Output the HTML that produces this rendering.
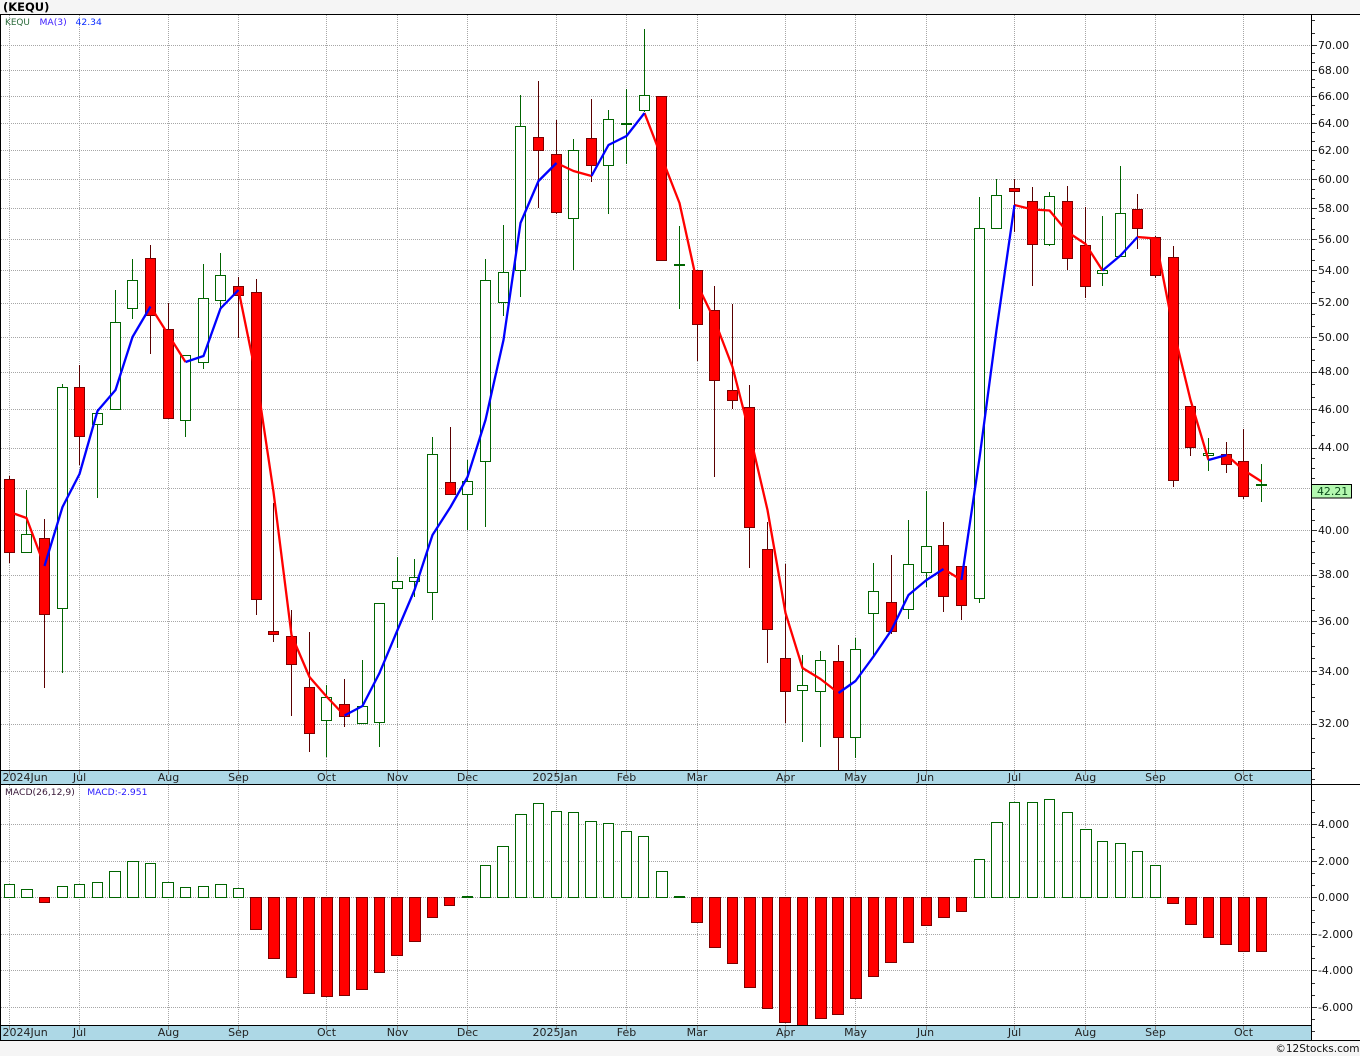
<!DOCTYPE html>
<html><head><meta charset="utf-8"><title>KEQU</title>
<style>html,body{margin:0;padding:0;background:#f5f5f5;width:1360px;height:1056px;overflow:hidden}svg{display:block}text{font-family:"DejaVu Sans","Liberation Sans",sans-serif}.a{font-size:10.9px;fill:#111}.s{font-size:11px;fill:#222}.m{font-size:11px;fill:#222;text-anchor:middle}</style></head>
<body>
<svg xmlns="http://www.w3.org/2000/svg" width="1360" height="1056" viewBox="0 0 1360 1056">
<rect width="1360" height="1056" fill="#f5f5f5"/>
<rect x="0" y="14" width="1360" height="1027" fill="#fff"/>
<text x="3" y="11" style="font-size:11.5px;font-weight:bold;fill:#000">(KEQU)</text>
<g shape-rendering="crispEdges" fill="none">
<path stroke="#a6a6a6" stroke-dasharray="1 1" d="M1 45.5H1311M1 70.5H1311M1 96.5H1311M1 123.5H1311M1 150.5H1311M1 179.5H1311M1 208.5H1311M1 239.5H1311M1 270.5H1311M1 303.5H1311M1 337.5H1311M1 372.5H1311M1 409.5H1311M1 448.5H1311M1 488.5H1311M1 530.5H1311M1 575.5H1311M1 621.5H1311M1 671.5H1311M1 724.5H1311M1 824.5H1311M1 861.5H1311M1 897.5H1311M1 934.5H1311M1 970.5H1311M1 1007.5H1311"/>
<path stroke="#a6a6a6" stroke-dasharray="1 1" d="M9.5 15V770M79.5 15V770M168.5 15V770M238.5 15V770M326.5 15V770M397.5 15V770M467.5 15V770M556.5 15V770M626.5 15V770M697.5 15V770M785.5 15V770M855.5 15V770M926.5 15V770M1014.5 15V770M1085.5 15V770M1155.5 15V770M1243.5 15V770M9.5 785V1025M79.5 785V1025M168.5 785V1025M238.5 785V1025M326.5 785V1025M397.5 785V1025M467.5 785V1025M556.5 785V1025M626.5 785V1025M697.5 785V1025M785.5 785V1025M855.5 785V1025M926.5 785V1025M1014.5 785V1025M1085.5 785V1025M1155.5 785V1025M1243.5 785V1025"/>
<path stroke="#006400" d="M26.5 490V552M62.5 384V673M97.5 409V498M115.5 290V409M132.5 259V319M185.5 355V437M203.5 264V369M220.5 253V309M326.5 685V757M362.5 660V723M379.5 603V747M397.5 557V648M414.5 559V597M432.5 437V620M467.5 460V530M485.5 259V527M503.5 225V316M520.5 95V297M573.5 139V270M608.5 110V214M626.5 89V164M644.5 29V112M679.5 226V309M802.5 655V742M820.5 651V747M855.5 638V758M873.5 563V657M908.5 520V619M926.5 491V587M979.5 197V603M996.5 179V228M1049.5 192V246M1102.5 216V286M1120.5 166V256M1208.5 438V471M1261.5 464V502"/>
<path stroke="#5a0000" d="M9.5 476V563M44.5 519V688M79.5 365V465M150.5 245V354M168.5 303V418M238.5 277V338M256.5 279V615M273.5 503V642M291.5 610V716M309.5 632V752M344.5 679V727M450.5 427V494M538.5 81V208M556.5 120V214M591.5 99V182M697.5 270V361M714.5 286V477M732.5 304V409M749.5 385V568M767.5 522V663M785.5 564V723M838.5 645V770M891.5 555V634M943.5 522V612M961.5 566V620M1014.5 179V232M1032.5 187V286M1067.5 186V270M1085.5 207V298M1137.5 194V249M1155.5 236V278M1173.5 246V487M1190.5 406V456M1226.5 442V473M1243.5 429V499"/>
<path fill="#fff" stroke="#006400" d="M21.5 534.5h10V552.5h-10zM57.5 387.5h10V608.5h-10zM92.5 413.5h10V424.5h-10zM110.5 322.5h10V409.5h-10zM127.5 280.5h10V308.5h-10zM180.5 355.5h10V420.5h-10zM198.5 298.5h10V362.5h-10zM215.5 275.5h10V300.5h-10zM321.5 697.5h10V720.5h-10zM357.5 706.5h10V723.5h-10zM374.5 603.5h10V722.5h-10zM392.5 581.5h10V588.5h-10zM409.5 577.5h10V581.5h-10zM427.5 454.5h10V592.5h-10zM462.5 481.5h10V494.5h-10zM480.5 280.5h10V461.5h-10zM498.5 272.5h10V302.5h-10zM515.5 126.5h10V270.5h-10zM568.5 150.5h10V218.5h-10zM603.5 119.5h10V165.5h-10zM639.5 95.5h10V110.5h-10zM797.5 685.5h10V690.5h-10zM815.5 660.5h10V691.5h-10zM850.5 649.5h10V737.5h-10zM868.5 591.5h10V613.5h-10zM903.5 564.5h10V609.5h-10zM921.5 546.5h10V572.5h-10zM974.5 228.5h10V598.5h-10zM991.5 195.5h10V228.5h-10zM1044.5 196.5h10V244.5h-10zM1097.5 270.5h10V273.5h-10zM1115.5 213.5h10V256.5h-10zM1203.5 453.5h10V455.5h-10z"/>
<path fill="#006400" d="M621 123h11v2h-11zM674 264h11v2h-11zM1256 484h11v2h-11z"/>
<path fill="#f00" stroke="#7b0000" d="M4.5 479.5h10V552.5h-10zM39.5 538.5h10V614.5h-10zM74.5 387.5h10V436.5h-10zM145.5 258.5h10V315.5h-10zM163.5 329.5h10V418.5h-10zM233.5 286.5h10V295.5h-10zM251.5 292.5h10V599.5h-10zM268.5 631.5h10V634.5h-10zM286.5 636.5h10V664.5h-10zM304.5 687.5h10V733.5h-10zM339.5 704.5h10V716.5h-10zM445.5 482.5h10V494.5h-10zM533.5 137.5h10V150.5h-10zM551.5 154.5h10V212.5h-10zM586.5 138.5h10V165.5h-10zM656.5 96.5h10V260.5h-10zM692.5 270.5h10V324.5h-10zM709.5 310.5h10V380.5h-10zM727.5 390.5h10V400.5h-10zM744.5 407.5h10V527.5h-10zM762.5 549.5h10V629.5h-10zM780.5 658.5h10V691.5h-10zM833.5 661.5h10V737.5h-10zM886.5 602.5h10V631.5h-10zM938.5 545.5h10V596.5h-10zM956.5 566.5h10V605.5h-10zM1009.5 188.5h10V191.5h-10zM1027.5 201.5h10V244.5h-10zM1062.5 201.5h10V258.5h-10zM1080.5 245.5h10V286.5h-10zM1132.5 209.5h10V228.5h-10zM1150.5 237.5h10V275.5h-10zM1168.5 257.5h10V480.5h-10zM1185.5 406.5h10V447.5h-10zM1221.5 454.5h10V464.5h-10zM1238.5 461.5h10V496.5h-10z"/>
<path fill="#fff" stroke="#006400" d="M4.5 884.5h10V897.5h-10zM21.5 889.5h11V897.5h-11zM57.5 886.5h10V897.5h-10zM74.5 884.5h10V897.5h-10zM92.5 882.5h10V897.5h-10zM109.5 871.5h11V897.5h-11zM127.5 861.5h11V897.5h-11zM145.5 863.5h10V897.5h-10zM162.5 882.5h11V897.5h-11zM180.5 887.5h10V897.5h-10zM198.5 886.5h10V897.5h-10zM215.5 884.5h11V897.5h-11zM233.5 888.5h10V897.5h-10zM480.5 865.5h10V897.5h-10zM497.5 846.5h11V897.5h-11zM515.5 814.5h11V897.5h-11zM533.5 803.5h10V897.5h-10zM551.5 811.5h10V897.5h-10zM568.5 812.5h10V897.5h-10zM585.5 821.5h11V897.5h-11zM603.5 823.5h10V897.5h-10zM621.5 831.5h10V897.5h-10zM638.5 836.5h10V897.5h-10zM656.5 871.5h11V897.5h-11zM974.5 859.5h10V897.5h-10zM991.5 822.5h11V897.5h-11zM1009.5 802.5h10V897.5h-10zM1027.5 802.5h10V897.5h-10zM1044.5 799.5h10V897.5h-10zM1062.5 812.5h10V897.5h-10zM1080.5 829.5h11V897.5h-11zM1097.5 841.5h10V897.5h-10zM1115.5 843.5h10V897.5h-10zM1132.5 851.5h10V897.5h-10zM1150.5 865.5h10V897.5h-10z"/>
<path fill="#006400" d="M462 896h11v2h-11zM674 896h11v2h-11z"/>
<path fill="#f00" stroke="#7b0000" d="M39.5 897.5h10V902.5h-10zM250.5 897.5h11V929.5h-11zM268.5 897.5h11V958.5h-11zM286.5 897.5h10V977.5h-10zM303.5 897.5h11V993.5h-11zM321.5 897.5h11V996.5h-11zM339.5 897.5h10V995.5h-10zM356.5 897.5h11V989.5h-11zM374.5 897.5h10V972.5h-10zM391.5 897.5h11V955.5h-11zM409.5 897.5h11V941.5h-11zM427.5 897.5h10V917.5h-10zM444.5 897.5h10V905.5h-10zM691.5 897.5h11V922.5h-11zM709.5 897.5h11V947.5h-11zM727.5 897.5h10V963.5h-10zM744.5 897.5h11V987.5h-11zM762.5 897.5h10V1008.5h-10zM779.5 897.5h11V1022.5h-11zM797.5 897.5h10V1030h-10zM815.5 897.5h11V1018.5h-11zM832.5 897.5h11V1014.5h-11zM850.5 897.5h11V998.5h-11zM868.5 897.5h10V976.5h-10zM885.5 897.5h11V962.5h-11zM903.5 897.5h10V942.5h-10zM921.5 897.5h10V925.5h-10zM938.5 897.5h11V917.5h-11zM956.5 897.5h10V911.5h-10zM1167.5 897.5h11V903.5h-11zM1185.5 897.5h11V924.5h-11zM1203.5 897.5h10V937.5h-10zM1220.5 897.5h11V944.5h-11zM1238.5 897.5h11V951.5h-11zM1256.5 897.5h10V951.5h-10z"/>
</g>
<g fill="none" stroke-width="2.3" stroke-linejoin="round">
<path stroke="#f00" d="M9.5 512L26.5 518L44.5 566M150.5 306.5L168.5 335L185.5 362M238.5 290L256.5 378L273.5 492L291.5 635L309.5 677L326.5 696.5L344.5 715.5M556.5 163L573.5 171L591.5 176M644.5 113L661.5 157L679.5 203L697.5 285L714.5 320L732.5 367L749.5 433L767.5 510L785.5 613L802.5 668L820.5 679L838.5 693M943.5 569L961.5 580M1014.5 205L1032.5 209.5L1049.5 210.5L1067.5 232L1085.5 244L1102.5 270.5M1137.5 237L1155.5 238.5L1173.5 330L1190.5 400L1208.5 460M1226.5 455L1243.5 470L1261.5 481.5"/>
<path stroke="#00f" d="M44.5 566L62.5 507L79.5 474L97.5 411L115.5 390L132.5 337L150.5 306.5M185.5 362L203.5 356L220.5 308.5L238.5 290M344.5 715.5L362.5 706L379.5 673L397.5 630L414.5 590L432.5 535L450.5 507L467.5 477L485.5 420L503.5 340L520.5 223L538.5 181L556.5 163M591.5 176L608.5 145L626.5 136L644.5 113M838.5 693L855.5 681L873.5 656.5L891.5 630L908.5 595L926.5 580L943.5 569M961.5 580L979.5 458L996.5 330L1014.5 205M1102.5 270.5L1120.5 255.5L1137.5 237M1208.5 460L1226.5 455"/>
</g>
<g shape-rendering="crispEdges">
<rect x="0" y="770" width="1311" height="14" fill="#add8e6"/>
<rect x="0" y="1025" width="1311" height="15" fill="#add8e6"/>
<path fill="none" stroke="#888" d="M9.5 771V775M79.5 771V775M168.5 771V775M238.5 771V775M326.5 771V775M397.5 771V775M467.5 771V775M556.5 771V775M626.5 771V775M697.5 771V775M785.5 771V775M855.5 771V775M926.5 771V775M1014.5 771V775M1085.5 771V775M1155.5 771V775M1243.5 771V775M9.5 1026V1030M79.5 1026V1030M168.5 1026V1030M238.5 1026V1030M326.5 1026V1030M397.5 1026V1030M467.5 1026V1030M556.5 1026V1030M626.5 1026V1030M697.5 1026V1030M785.5 1026V1030M855.5 1026V1030M926.5 1026V1030M1014.5 1026V1030M1085.5 1026V1030M1155.5 1026V1030M1243.5 1026V1030"/>
<path fill="none" stroke="#000" d="M0 14.5H1360M0 770.5H1311M0 784.5H1360M0 1025.5H1311M0 1040.5H1360M0.5 14V1041M1311.5 14V1041"/>
<path fill="none" stroke="#333" d="M1312 45.5h5M1312 70.5h5M1312 96.5h5M1312 123.5h5M1312 150.5h5M1312 179.5h5M1312 208.5h5M1312 239.5h5M1312 270.5h5M1312 303.5h5M1312 337.5h5M1312 372.5h5M1312 409.5h5M1312 448.5h5M1312 530.5h5M1312 575.5h5M1312 621.5h5M1312 671.5h5M1312 724.5h5M1312 824.5h5M1312 861.5h5M1312 897.5h5M1312 934.5h5M1312 970.5h5M1312 1007.5h5"/>
<path fill="none" stroke="#333" d="M1312 20.5h3M1312 33.5h3M1312 53.5h3M1312 62.5h3M1312 79.5h3M1312 87.5h3M1312 105.5h3M1312 114.5h3M1312 132.5h3M1312 141.5h3M1312 160.5h3M1312 169.5h3M1312 189.5h3M1312 198.5h3M1312 218.5h3M1312 229.5h3M1312 249.5h3M1312 260.5h3M1312 281.5h3M1312 292.5h3M1312 314.5h3M1312 326.5h3M1312 349.5h3M1312 360.5h3M1312 384.5h3M1312 397.5h3M1312 422.5h3M1312 435.5h3M1312 458.5h3M1312 468.5h3M1312 478.5h3M1312 509.5h3M1312 520.5h3M1312 541.5h3M1312 552.5h3M1312 563.5h3M1312 586.5h3M1312 598.5h3M1312 610.5h3M1312 633.5h3M1312 646.5h3M1312 658.5h3M1312 684.5h3M1312 697.5h3M1312 711.5h3M1312 738.5h3M1312 752.5h3M1312 768.5h3M1312 779.5h3M1312 800.5h3M1312 812.5h3M1312 837.5h3M1312 849.5h3M1312 873.5h3M1312 885.5h3M1312 910.5h3M1312 922.5h3M1312 946.5h3M1312 958.5h3M1312 983.5h3M1312 995.5h3M1312 1019.5h3M1312 1031.5h3"/>
<rect x="1311.5" y="484.5" width="40" height="13.5" fill="#b4f8b0" stroke="#000"/>
</g>
<g style="font-size:9.2px">
<text x="5" y="25" style="font-size:8.9px;fill:#2a6a3a">KEQU</text>
<text x="39.5" y="25" fill="#3a1aff">MA(3)</text>
<text x="75.5" y="25" fill="#0a2cff">42.34</text>
<text x="5" y="795" fill="#3a1a3a">MACD(26,12,9)</text>
<text x="87.2" y="795" fill="#2a1aff">MACD:-2.951</text>
</g>
<g>
<text class="a" x="1318" y="49">70.00</text><text class="a" x="1318" y="74">68.00</text><text class="a" x="1318" y="100">66.00</text><text class="a" x="1318" y="127">64.00</text><text class="a" x="1318" y="154">62.00</text><text class="a" x="1318" y="183">60.00</text><text class="a" x="1318" y="212">58.00</text><text class="a" x="1318" y="243">56.00</text><text class="a" x="1318" y="274">54.00</text><text class="a" x="1318" y="306">52.00</text><text class="a" x="1318" y="341">50.00</text><text class="a" x="1318" y="375">48.00</text><text class="a" x="1318" y="413">46.00</text><text class="a" x="1318" y="451">44.00</text><text class="a" x="1318" y="534">40.00</text><text class="a" x="1318" y="578">38.00</text><text class="a" x="1318" y="625">36.00</text><text class="a" x="1318" y="675">34.00</text><text class="a" x="1318" y="727">32.00</text>
<text class="a" x="1317" y="495" style="fill:#0a4a1a">42.21</text>
<text class="a" x="1318" y="828">4.000</text><text class="a" x="1318" y="865">2.000</text><text class="a" x="1318" y="901">0.000</text><text class="a" x="1318" y="938">-2.000</text><text class="a" x="1318" y="974">-4.000</text><text class="a" x="1318" y="1011">-6.000</text>
</g>
<g>
<text class="s" x="2.5" y="781">2024Jun</text><text class="m" x="79.5" y="781">Jul</text><text class="m" x="168.5" y="781">Aug</text><text class="m" x="238.5" y="781">Sep</text><text class="m" x="326.5" y="781">Oct</text><text class="m" x="397.5" y="781">Nov</text><text class="m" x="467.5" y="781">Dec</text><text class="m" x="555" y="781">2025Jan</text><text class="m" x="626.5" y="781">Feb</text><text class="m" x="697" y="781">Mar</text><text class="m" x="785.5" y="781">Apr</text><text class="m" x="855.5" y="781">May</text><text class="m" x="925.5" y="781">Jun</text><text class="m" x="1014.5" y="781">Jul</text><text class="m" x="1085.5" y="781">Aug</text><text class="m" x="1155.5" y="781">Sep</text><text class="m" x="1243.5" y="781">Oct</text>
<text class="s" x="2.5" y="1036">2024Jun</text><text class="m" x="79.5" y="1036">Jul</text><text class="m" x="168.5" y="1036">Aug</text><text class="m" x="238.5" y="1036">Sep</text><text class="m" x="326.5" y="1036">Oct</text><text class="m" x="397.5" y="1036">Nov</text><text class="m" x="467.5" y="1036">Dec</text><text class="m" x="555" y="1036">2025Jan</text><text class="m" x="626.5" y="1036">Feb</text><text class="m" x="697" y="1036">Mar</text><text class="m" x="785.5" y="1036">Apr</text><text class="m" x="855.5" y="1036">May</text><text class="m" x="925.5" y="1036">Jun</text><text class="m" x="1014.5" y="1036">Jul</text><text class="m" x="1085.5" y="1036">Aug</text><text class="m" x="1155.5" y="1036">Sep</text><text class="m" x="1243.5" y="1036">Oct</text>
</g>
<text x="1359.5" y="1052" text-anchor="end" style="font-size:10.5px;fill:#111">©12Stocks.com</text>
</svg>
</body></html>
